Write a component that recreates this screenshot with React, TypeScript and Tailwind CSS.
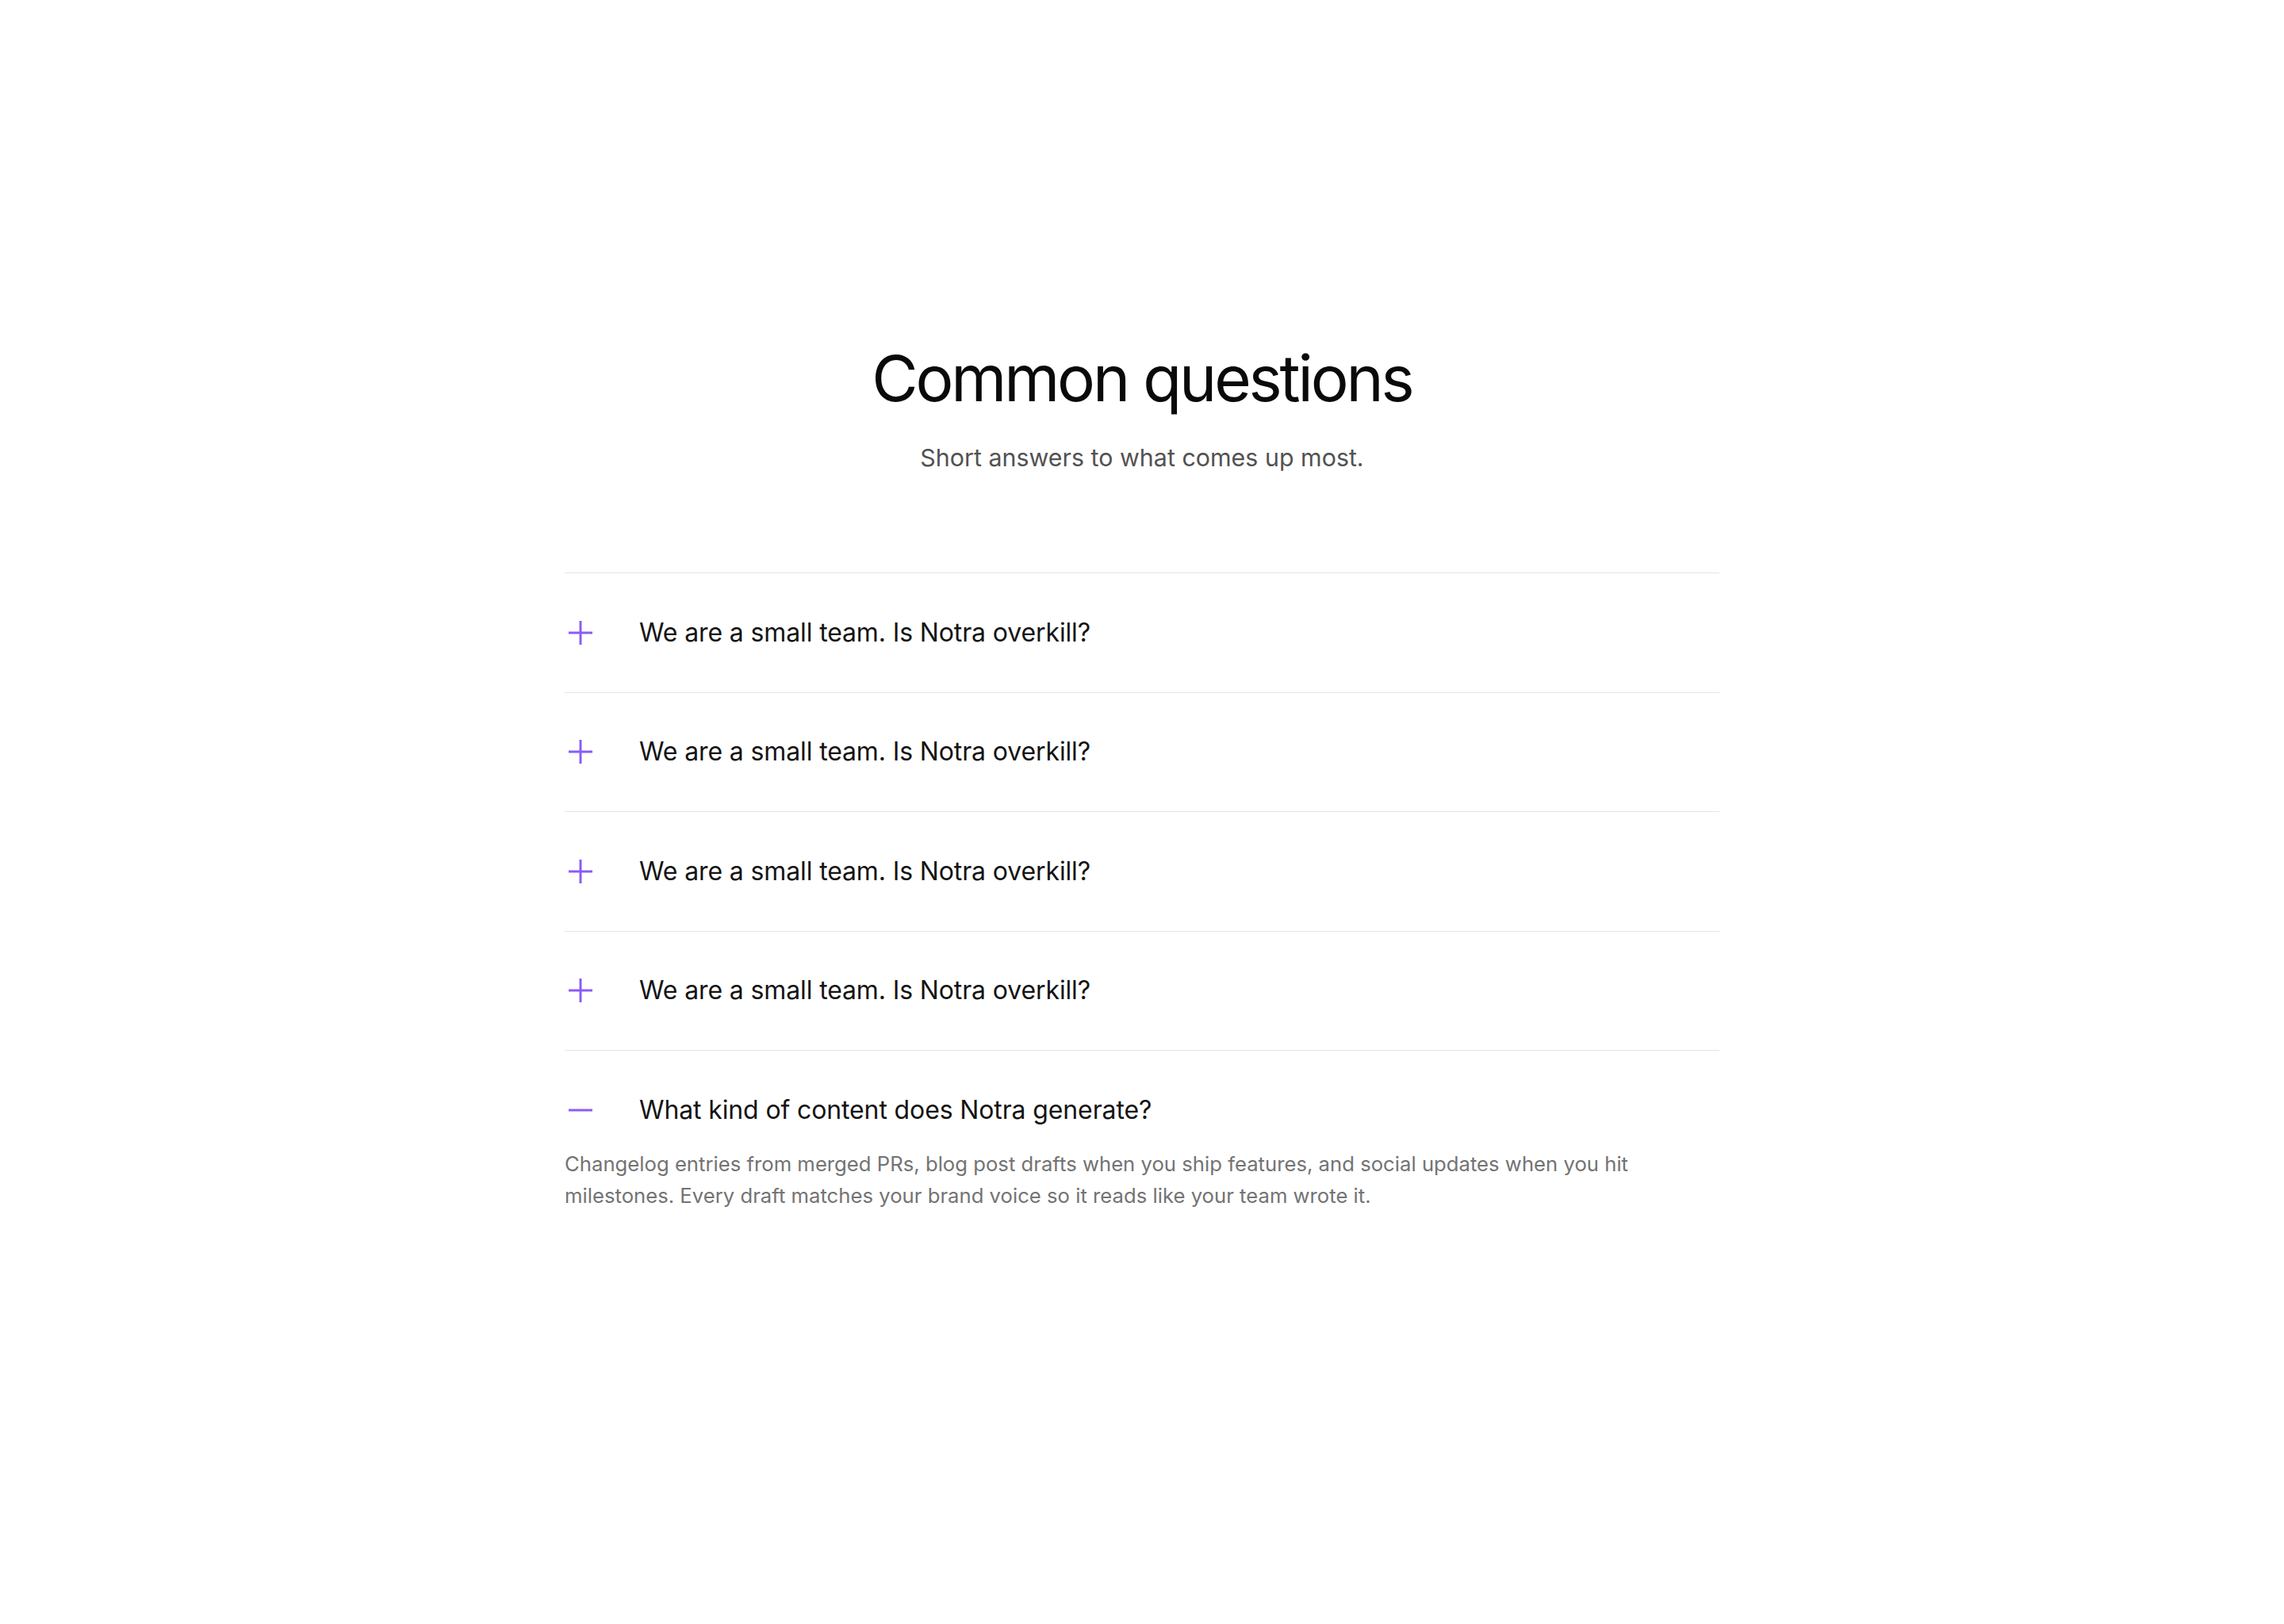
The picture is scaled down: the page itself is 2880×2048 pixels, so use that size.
import {useState} from "react";

const faqs = [
    {
        question: "We are a small team. Is Notra overkill?",
        answer: "No. Notra runs quietly in the background and only surfaces drafts when something ships, so a team of two gets the same value as a team of fifty.",
    },
    {
        question: "We are a small team. Is Notra overkill?",
        answer: "No. Notra runs quietly in the background and only surfaces drafts when something ships, so a team of two gets the same value as a team of fifty.",
    },
    {
        question: "We are a small team. Is Notra overkill?",
        answer: "No. Notra runs quietly in the background and only surfaces drafts when something ships, so a team of two gets the same value as a team of fifty.",
    },
    {
        question: "We are a small team. Is Notra overkill?",
        answer: "No. Notra runs quietly in the background and only surfaces drafts when something ships, so a team of two gets the same value as a team of fifty.",
    },
    {
        question: "What kind of content does Notra generate?",
        answer: "Changelog entries from merged PRs, blog post drafts when you ship features, and social updates when you hit milestones. Every draft matches your brand voice so it reads like your team wrote it.",
    },
];

function ToggleIcon({open}: {open: boolean}) {
    return (
        <svg width="32" height="32" viewBox="0 0 32 32" fill="none" stroke="#8b5cf6" strokeWidth="3" strokeLinecap="butt">
            <path d="M1 16h30" />
            {!open && <path d="M16 1v30" />}
        </svg>
    );
}

export default function App() {
    const [openIndex, setOpenIndex] = useState<number | null>(4);

    return (
        <div className="min-h-screen bg-white font-['Inter',sans-serif] pt-[433px] pb-[200px]">
            <section className="w-[1456px] mx-auto">
                <header className="flex flex-col items-center text-center">
                    <h2 className="text-[80px] leading-[88px] font-normal tracking-[-0.04em] text-[#0a0a0a]">Common questions</h2>
                    <p className="mt-[36px] text-[30.4px] leading-[40px] text-[#525252]">Short answers to what comes up most.</p>
                </header>

                <div className="mt-[125px] flex flex-col">
                    {faqs.map((faq, i) => {
                        const open = openIndex === i;
                        return (
                            <div key={i} className={i === faqs.length - 1 ? "border-t border-[#e5e5e5]" : "border-y border-[#e5e5e5] -mb-px"}>
                                <button
                                    className={`w-full flex items-center gap-[54px] text-left ${open ? "pt-[58.75px] pb-[32px]" : "py-[58.75px]"}`}
                                    onClick={() => setOpenIndex(open ? null : i)}
                                >
                                    <span className="w-[40px] flex justify-center shrink-0"><ToggleIcon open={open} /></span>
                                    <span className="text-[32px] leading-[32px] text-[#141414] tracking-[-0.004em]">{faq.question}</span>
                                </button>
                                {open && <p className="text-[25.7px] leading-[40px] text-[#737373] pr-[40px]">{faq.answer}</p>}
                            </div>
                        );
                    })}
                </div>
            </section>
        </div>
    );
}
